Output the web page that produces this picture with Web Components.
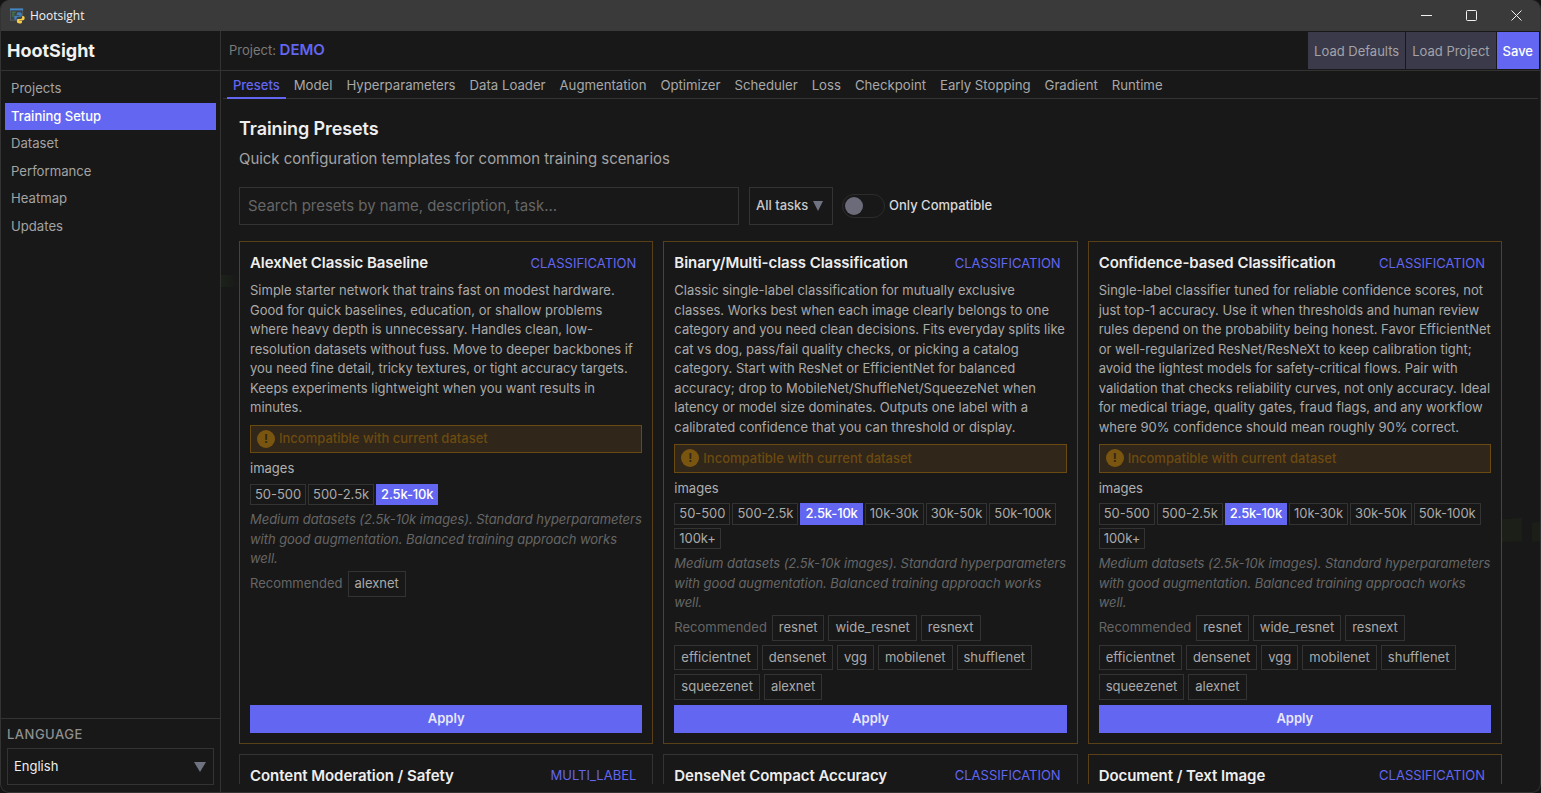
<!DOCTYPE html>
<html lang="en">
<head>
<meta charset="utf-8">
<title>Hootsight</title>
<style>
  html, body { margin: 0; height: 100%; overflow: hidden; background: #141414; }
  body { font-family: Inter, "Liberation Sans", sans-serif; font-size: 13px; line-height: 1.5; color: #a8a8a8; }
</style>
</head>
<body>
<hoot-app>
  <hoot-titlebar slot="titlebar"></hoot-titlebar>
  <hoot-sidebar slot="sidebar"></hoot-sidebar>
  <hoot-header slot="header"></hoot-header>
  <hoot-tabs slot="tabs"></hoot-tabs>

  <preset-toolbar></preset-toolbar>
  <preset-grid>
    <preset-card name="AlexNet Classic Baseline" task="CLASSIFICATION" incompatible recommended="alexnet" sizes="3">
      Simple starter network that trains fast on modest hardware. Good for quick baselines, education, or shallow problems where heavy depth is unnecessary. Handles clean, low-resolution datasets without fuss. Move to deeper backbones if you need fine detail, tricky textures, or tight accuracy targets. Keeps experiments lightweight when you want results in minutes.
    </preset-card>
    <preset-card name="Binary/Multi-class Classification" task="CLASSIFICATION" incompatible sizes="7"
      recommended="resnet,wide_resnet,resnext,efficientnet,densenet,vgg,mobilenet,shufflenet,squeezenet,alexnet">
      Classic single-label classification for mutually exclusive classes. Works best when each image clearly belongs to one category and you need clean decisions. Fits everyday splits like cat vs dog, pass/fail quality checks, or picking a catalog category. Start with ResNet or EfficientNet for balanced accuracy; drop to MobileNet/ShuffleNet/SqueezeNet when latency or model size dominates. Outputs one label with a calibrated confidence that you can threshold or display.
    </preset-card>
    <preset-card name="Confidence-based Classification" task="CLASSIFICATION" incompatible sizes="7"
      recommended="resnet,wide_resnet,resnext,efficientnet,densenet,vgg,mobilenet,shufflenet,squeezenet,alexnet">
      Single-label classifier tuned for reliable confidence scores, not just top-1 accuracy. Use it when thresholds and human review rules depend on the probability being honest. Favor EfficientNet or well-regularized ResNet/ResNeXt to keep calibration tight; avoid the lightest models for safety-critical flows. Pair with validation that checks reliability curves, not only accuracy. Ideal for medical triage, quality gates, fraud flags, and any workflow where 90% confidence should mean roughly 90% correct.
    </preset-card>
    <preset-card name="Content Moderation / Safety" task="MULTI_LABEL" brief></preset-card>
    <preset-card name="DenseNet Compact Accuracy" task="CLASSIFICATION" brief></preset-card>
    <preset-card name="Document / Text Image" task="CLASSIFICATION" incompatible brief></preset-card>
  </preset-grid>
</hoot-app>

<script>
class HootApp extends HTMLElement {
  constructor() {
    super();
    this.attachShadow({ mode: "open" });
  }

  connectedCallback() {
    this.shadowRoot.innerHTML = `
      <style>
        :host { display: flex; flex-direction: column; height: 793px; box-sizing: border-box; border: 1px solid #333; border-top: 0; border-radius: 9px; overflow: hidden; background: #181818; }
        .body { flex: 1; display: flex; min-height: 0; }
        .main { flex: 1; display: flex; flex-direction: column; min-width: 0; position: relative; }
        .scroll {
          flex: 1; min-height: 0; margin-bottom: 8px; padding: 19px 38px 0 18px; overflow: hidden;
        }
        .ghost { position: absolute; inset: 0; pointer-events: none;
          background:
            linear-gradient(176deg, transparent 0 64%, #1b1f18 64.1% 67%, transparent 67.1%) 1281px 0 / 20px 100% no-repeat,
            linear-gradient(176deg, transparent 0 64.500%, #1b1f18 64.6% 67%, transparent 67.1%) 1311px 0 / 10px 100% no-repeat,
            linear-gradient(to right, #1c2219, transparent) 0 244px / 18px 12px no-repeat;
        }
        .scroll > * { position: relative; }
      </style>
      <slot name="titlebar"></slot>
      <div class="body">
        <slot name="sidebar"></slot>
        <div class="main">
          <div class="ghost"></div>
          <slot name="header"></slot>
          <slot name="tabs"></slot>
          <div class="scroll"><slot></slot></div>
        </div>
      </div>
    `;
  }
}

class HootTitlebar extends HTMLElement {
  constructor() {
    super();
    this.attachShadow({ mode: "open" });
  }

  connectedCallback() {
    this.shadowRoot.innerHTML = `
      <style>
        :host { display: flex; align-items: center; height: 31px; flex: none; margin: 0 -1px; padding-right: 2px; background: #3a3a3a; color: #f2f2f2; font: 12px "Open Sans", "Liberation Sans", sans-serif; }
        .logo { width: 15px; height: 16px; margin: 0 5px 0 10px; }
        .title { flex: 1; }
        .ctl { width: 45px; height: 31px; display: flex; align-items: center; justify-content: center; }
        svg.g { width: 11px; height: 11px; fill: none; stroke: #f0f0f0; stroke-width: 1; }
      </style>
      <svg class="logo" viewBox="0 0 16 16">
        <rect x="0.5" y="0.5" width="13" height="12" fill="#3c4248" stroke="#565c60"/>
        <rect x="0" y="0" width="14" height="2" fill="#3f86c6"/>
        <path d="M2 4h4M2 6h3M2 8h3" stroke="#4e8a4a"/>
        <path d="M9.6 4C7.4 4 7.2 5 7.2 6v1h2.8v.6H6C5 7.6 4.400 8.400 4.400 9.800S5 12 6 12h1V10.600c0-1 .8-1.800 1.800-1.800h2.400c.8 0 1.400-.6 1.400-1.400V5.800C12.600 4.700 11.400 4 9.600 4z" fill="#3f7fb8"/>
        <path d="M10.400 16c2.200 0 2.400-1 2.400-2v-1H10v-.6h4c1 0 1.600-.8 1.600-2.200S15 8 14 8h-1v1.400c0 1-.8 1.800-1.800 1.800H8.800c-.8 0-1.400.6-1.400 1.400v1.600C7.400 15.300 8.600 16 10.400 16z" fill="#f6cc45"/>
      </svg>
      <span class="title">Hootsight</span>
      <span class="ctl"><svg class="g" viewBox="0 0 11 11"><path d="M0 5.500h11"/></svg></span>
      <span class="ctl"><svg class="g" viewBox="0 0 11 11"><rect x=".5" y=".5" width="10" height="10" rx="1"/></svg></span>
      <span class="ctl"><svg class="g" viewBox="0 0 11 11"><path d="M.5 .5l10 10M10.500 .5l-10 10"/></svg></span>
    `;
  }
}

class HootSidebar extends HTMLElement {
  constructor() {
    super();
    this.attachShadow({ mode: "open" });
  }

  connectedCallback() {
    const items = ["Projects", "Training Setup", "Dataset", "Performance", "Heatmap", "Updates"];
    this.shadowRoot.innerHTML = `
      <style>
        :host { display: flex; flex-direction: column; width: 220px; height: 100%; box-sizing: border-box; border-right: 1px solid #333; flex: none; }
        .brand { height: 40px; box-sizing: border-box; border-bottom: 1px solid #333; flex: none; padding-left: 6px; display: flex; align-items: center; font-size: 18px; font-weight: 700; color: #f2f2f2; }
        nav { flex: 1; display: flex; flex-direction: column; padding: 4px 4px 0; }
        a { padding: 4px 6px; color: #a3a3a3; font-size: 13.15px; line-height: 19.5px; }
        a.on { background: #6366f1; color: #fff; font-weight: 500; font-size: 13px; }
        .lang { border-top: 1px solid #333; padding: 6px 6px 7px; }
        .cap { font-size: 13px; letter-spacing: .5px; color: #8f8f8f; font-weight: 500; margin-bottom: 4px; }
        .sel { height: 37px; box-sizing: border-box; border: 1px solid #333; display: flex; align-items: center; justify-content: space-between; padding: 0 7px 0 6px; color: #eee; }
        .tri { width: 0; height: 0; border: 6px solid transparent; border-top: 10px solid #6f7280; border-bottom: 0; }
      </style>
      <div class="brand">HootSight</div>
      <nav>${items.map(i => `<a class="${i === "Training Setup" ? "on" : ""}">${i}</a>`).join("")}</nav>
      <div class="lang">
        <div class="cap">LANGUAGE</div>
        <div class="sel"><span>English</span><span class="tri"></span></div>
      </div>
    `;
  }
}

class HootHeader extends HTMLElement {
  constructor() {
    super();
    this.attachShadow({ mode: "open" });
  }

  connectedCallback() {
    this.shadowRoot.innerHTML = `
      <style>
        :host { display: flex; align-items: stretch; height: 40px; box-sizing: border-box; border-bottom: 1px solid #333; padding: 1px 1px 1px 8px; flex: none; }
        .proj { flex: 1; align-self: center; color: #7a7a7a; }
        .proj b { color: #6366f1; font-size: 15px; font-weight: 600; }
        button { font: inherit; border: 0; padding: 2px 6px 0; margin-left: 1px; background: #3a3a4a; color: #a3a3a8; }
        button.primary { background: #6366f1; color: #fff; font-weight: 500; }
      </style>
      <div class="proj">Project: <b>DEMO</b></div>
      <button>Load Defaults</button>
      <button>Load Project</button>
      <button class="primary">Save</button>
    `;
  }
}

class HootTabs extends HTMLElement {
  constructor() {
    super();
    this.attachShadow({ mode: "open" });
  }

  connectedCallback() {
    const tabs = ["Presets", "Model", "Hyperparameters", "Data Loader", "Augmentation", "Optimizer", "Scheduler", "Loss", "Checkpoint", "Early Stopping", "Gradient", "Runtime"];
    this.shadowRoot.innerHTML = `
      <style>
        :host { display: flex; gap: 2px; height: 28px; box-sizing: border-box; margin: 0 2px; padding-left: 4px; border-bottom: 1px solid #333; flex: none; }
        a { padding: 5px 6px 0; color: #a8a8a8; height: 28px; box-sizing: border-box; font-size: 13.18px; line-height: 19.5px; }
        a.on { color: #6366f1; font-weight: 500; font-size: 13px; border-bottom: 2px solid #6366f1; }
      </style>
      ${tabs.map((t, i) => `<a class="${i === 0 ? "on" : ""}">${t}</a>`).join("")}
    `;
  }
}

class PresetToolbar extends HTMLElement {
  constructor() {
    super();
    this.attachShadow({ mode: "open" });
  }

  connectedCallback() {
    this.shadowRoot.innerHTML = `
      <style>
        :host { display: block; margin-bottom: 16px; }
        h2 { margin: 0; font-size: 18px; font-weight: 600; line-height: 22px; color: #eee; letter-spacing: -.1px; }
        p { margin: 9px 0 17px; font-size: 14.93px; line-height: 21px; color: #a3a3a3; }
        .row { display: flex; align-items: center; gap: 10px; height: 38px; }
        .search { width: 500px; height: 38px; box-sizing: border-box; border: 1px solid #333; display: flex; align-items: center; padding: 0 0 0 8px; font-size: 14.93px; color: #666; }
        .sel { width: 84px; height: 38px; box-sizing: border-box; border: 1px solid #333; display: flex; align-items: center; gap: 5px; padding-left: 6px; color: #c8c8c8; font-weight: 500; }
        .tri { width: 0; height: 0; border: 5.5px solid transparent; border-top: 10px solid #6f7280; border-bottom: 0; }
        .sw { display: flex; align-items: center; gap: 4px; margin-left: -1px; color: #d8d8d8; font-weight: 500; }
        .track { width: 43px; height: 24px; box-sizing: border-box; border: 1px solid #2c2c2c; border-radius: 12px; display: flex; align-items: center; padding-left: 2px; }
        .knob { width: 18px; height: 18px; border-radius: 50%; background: #6b6b7a; }
      </style>
      <h2>Training Presets</h2>
      <p>Quick configuration templates for common training scenarios</p>
      <div class="row">
        <div class="search">Search presets by name, description, task...</div>
        <div class="sel"><span>All tasks</span><span class="tri"></span></div>
        <div class="sw"><span class="track"><span class="knob"></span></span><span>Only Compatible</span></div>
      </div>
    `;
  }
}

class PresetGrid extends HTMLElement {
  constructor() {
    super();
    this.attachShadow({ mode: "open" });
  }

  connectedCallback() {
    this.shadowRoot.innerHTML = `
      <style>
        :host { display: grid; grid-template-columns: repeat(3, 1fr); gap: 10px; }
      </style>
      <slot></slot>
    `;
  }
}

class PresetCard extends HTMLElement {
  constructor() {
    super();
    this.attachShadow({ mode: "open" });
  }

  connectedCallback() {
    const sizes = ["50-500", "500-2.5k", "2.5k-10k", "10k-30k", "30k-50k", "50k-100k", "100k+"].slice(0, Number(this.getAttribute("sizes") || 0));
    const rec = (this.getAttribute("recommended") || "").split(",").filter(Boolean);
    const full = `
      <div class="desc"><slot></slot></div>
      <div class="warn"><span class="ic">!</span>Incompatible with current dataset</div>
      <div class="lbl">images</div>
      <div class="sizes">${sizes.map(s => `<span class="${s === "2.5k-10k" ? "sz on" : "sz"}">${s}</span>`).join("")}</div>
      <div class="note">Medium datasets (2.5k-10k images). Standard hyperparameters with good augmentation. Balanced training approach works well.</div>
      <div class="rec"><span class="rl">Recommended</span>${rec.map(r => `<span class="tag">${r}</span>`).join("")}</div>
      <button>Apply</button>
    `;
    this.shadowRoot.innerHTML = `
      <style>
        :host { display: flex; flex-direction: column; min-width: 0; box-sizing: border-box; background: #181818; border: 1px solid #333; padding: 10px; }
        :host([incompatible]) { border-color: #5a4017; }
        .head { display: flex; justify-content: space-between; align-items: center; height: 21px; margin-bottom: 7px; padding-top: 1px; box-sizing: content-box; }
        .name { font-size: 15px; font-weight: 600; color: #eee; letter-spacing: -.05px; }
        .task { color: #6366f1; padding-right: 6px; }
        .desc { color: #aaa; }
        .warn { display: flex; align-items: center; gap: 4px; height: 28.500px; box-sizing: border-box; margin-top: 7px; padding-left: 6px; background: #30261a; border: 1px solid #6b4a12; color: #6d4b10; font-weight: 500; }
        .ic { width: 18px; height: 18px; border-radius: 50%; background: #7a5510; color: #30261a; font-size: 12px; font-weight: 700; line-height: 18px; text-align: center; }
        .lbl { margin-top: 6px; color: #b0b0b0; }
        .sizes { display: flex; flex-wrap: wrap; gap: 3px 2px; margin-top: 5px; }
        .sz { border: 1px solid #333; padding: 0 4px; color: #aaa; letter-spacing: -.05px; }
        .sz.on { background: #6366f1; border-color: #6366f1; color: #fff; font-weight: 500; letter-spacing: -.15px; }
        .note { margin-top: 5.25px; font-style: italic; color: #666; letter-spacing: -.05px; }
        .rec { display: flex; flex-wrap: wrap; align-items: center; gap: 4px; margin: 2.25px 0 5px; }
        .rl { color: #666; margin-right: 1px; }
        .tag { border: 1px solid #333; padding: 2px 6px; color: #aaa; }
        button { margin-top: auto; height: 28px; flex: none; border: 0; background: #6366f1; color: #e8e8f8; font: inherit; font-weight: 600; }
      </style>
      <div class="head"><span class="name">${this.getAttribute("name")}</span><span class="task">${this.getAttribute("task")}</span></div>
      ${this.hasAttribute("brief") ? "" : full}
    `;
  }
}

customElements.define("hoot-app", HootApp);
customElements.define("hoot-titlebar", HootTitlebar);
customElements.define("hoot-sidebar", HootSidebar);
customElements.define("hoot-header", HootHeader);
customElements.define("hoot-tabs", HootTabs);
customElements.define("preset-toolbar", PresetToolbar);
customElements.define("preset-grid", PresetGrid);
customElements.define("preset-card", PresetCard);
</script>
</body>
</html>
